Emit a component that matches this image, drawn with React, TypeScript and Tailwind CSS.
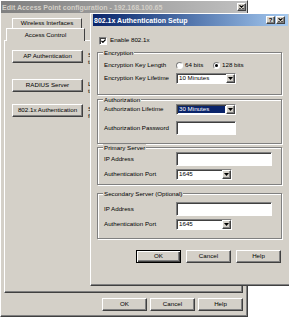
import React from "react";

const RAISED =
  "border border-t-white border-l-white border-r-[#404040] border-b-[#404040] shadow-[inset_-1px_-1px_0_#808080]";
const SUNKEN =
  "border border-t-[#808080] border-l-[#808080] border-r-white border-b-white shadow-[inset_1px_1px_0_#404040]";

const CloseGlyph = () => (
  <svg width="5" height="4" viewBox="0 0 5 4">
    <path d="M0.5 0.3L4.5 3.7M4.5 0.3L0.5 3.7" stroke="#000" strokeWidth="1.1" />
  </svg>
);

const Arrow = () => (
  <svg width="5" height="3" viewBox="0 0 5 3">
    <path d="M0 0H5L2.5 3Z" fill="#000" />
  </svg>
);

function CapButton({ children }: { children: React.ReactNode }) {
  return (
    <div className={`w-[9px] h-[8px] bg-[#d4d0c8] flex items-center justify-center ${RAISED}`}>
      {children}
    </div>
  );
}

function Button({ label, def, className = "" }: { label: string; def?: boolean; className?: string }) {
  const edge = def
    ? "border border-black shadow-[inset_1px_1px_0_#fff,inset_-1px_-1px_0_#404040,inset_-2px_-2px_0_#808080]"
    : RAISED;
  return (
    <div className={`h-[13px] bg-[#d4d0c8] flex items-center justify-center whitespace-nowrap ${edge} ${className}`}>
      {label}
    </div>
  );
}

function Combo({ value, className, active }: { value: string; className: string; active?: boolean }) {
  return (
    <div className={`h-full bg-white flex items-stretch ${SUNKEN} ${className}`}>
      <div className="flex-1 flex items-stretch p-[1px]">
        <span
          className={`flex-1 flex items-center pl-[1px] ${
            active ? "bg-[#0a246a] text-white" : ""
          }`}
        >
          {value}
        </span>
      </div>
      <div className={`w-[9px] bg-[#d4d0c8] flex items-center justify-center ${RAISED}`}>
        <Arrow />
      </div>
    </div>
  );
}

function Field({ className }: { className: string }) {
  return <div className={`h-full bg-white ${SUNKEN} ${className}`} />;
}

function Radio({ on }: { on?: boolean }) {
  return (
    <div className="w-[7px] h-[7px] rounded-full bg-white border border-t-[#808080] border-l-[#808080] border-r-white border-b-white flex items-center justify-center">
      {on && <div className="w-[3px] h-[3px] rounded-full bg-black" />}
    </div>
  );
}

function Group({ title, className, children }: { title: string; className: string; children: React.ReactNode }) {
  return (
    <div
      className={`ml-[4px] w-[185px] border border-[#808080] shadow-[inset_1px_1px_0_#fff,1px_1px_0_#fff] flex flex-col ${className}`}
    >
      <span className="-mt-[4px] ml-[5px] self-start px-[1px] h-[7px] leading-[7px] bg-[#d4d0c8] whitespace-nowrap">
        {title}
      </span>
      {children}
    </div>
  );
}

function Row({ label, className, children }: { label: string; className: string; children: React.ReactNode }) {
  return (
    <div className={`flex items-center pl-[6px] ${className}`}>
      <span className="w-[72px] whitespace-nowrap">{label}</span>
      {children}
    </div>
  );
}

// description beside each button; it sits under the dialog, only a sliver shows
function SideRow({ label, lines, className }: { label: string; lines: string[]; className: string }) {
  return (
    <div className={`flex items-start gap-[5px] ${className}`}>
      <Button label={label} className="w-[71px]" />
      <div className="flex flex-col pt-[1px] leading-[7px] whitespace-nowrap">
        {lines.map((l) => (
          <span key={l}>{l}</span>
        ))}
      </div>
    </div>
  );
}

export default function App() {
  return (
    <div className="relative w-[289px] h-[318px] overflow-hidden bg-white font-['Liberation_Sans',Arial,sans-serif] text-[6.2px] leading-none text-black">
      {/* Background window */}
      <div className={`w-[248px] h-[317px] bg-[#d4d0c8] flex flex-col ${RAISED}`}>
        <div className="h-[12px] flex items-center justify-between pl-[1px] pr-[1px] bg-gradient-to-r from-[#808080] to-[#c0c0c0]">
          <span className="text-[7px] font-bold text-[#d4d0c8] whitespace-nowrap">
            Edit Access Point configuration - 192.168.100.65
          </span>
          <CapButton>
            <CloseGlyph />
          </CapButton>
        </div>

        {/* Tabs */}
        <div className="flex flex-col">
          <div className="ml-[11px] mt-[5px] w-[70px] h-[10px] border border-b-0 border-t-white border-l-white border-r-[#404040] flex items-center justify-center whitespace-nowrap">
            Wireless Interfaces
          </div>
          <div className="relative z-10 ml-[5px] -mb-[1px] w-[79px] h-[13px] bg-[#d4d0c8] border border-b-0 border-t-white border-l-white border-r-[#404040] flex items-center justify-center whitespace-nowrap">
            Access Control
          </div>
        </div>

        {/* Tab panel */}
        <div className={`ml-[3px] w-[239px] h-[253px] flex flex-col pl-[7px] pt-[9px] ${RAISED}`}>
          <SideRow label="AP Authentication" lines={["Sets", "the"]} className="" />
          <SideRow label="RADIUS Server" lines={["Lists", "the"]} className="mt-[14px]" />
          <SideRow label="802.1x Authentication" lines={["Sets", "for"]} className="mt-[10px]" />
        </div>

        <div className="mt-[5px] mr-[4px] flex justify-end gap-[3px]">
          <Button label="OK" className="w-[45px]" />
          <Button label="Cancel" className="w-[45px]" />
          <Button label="Help" className="w-[45px]" />
        </div>
      </div>

      {/* 802.1x dialog, on top */}
      <div
        className={`absolute left-[90px] top-[13px] w-[201px] h-[273px] bg-[#d4d0c8] px-[2px] flex flex-col ${RAISED}`}
      >
        <div className="h-[12px] flex items-center justify-between pl-[1px] pr-[3px] bg-gradient-to-r from-[#0a246a] to-[#a6caf0]">
          <span className="text-[7px] font-bold text-white whitespace-nowrap">802.1x Authentication Setup</span>
          <div className="flex gap-[1px]">
            <CapButton>
              <span className="text-[6px] font-bold leading-none">?</span>
            </CapButton>
            <CapButton>
              <CloseGlyph />
            </CapButton>
          </div>
        </div>

        <div className="mt-[10px] ml-[6px] h-[9px] flex items-center gap-[3px]">
          <div className={`w-[8px] h-[8px] bg-white flex items-center justify-center ${SUNKEN}`}>
            <svg width="5" height="4" viewBox="0 0 5 4">
              <path d="M0.4 1.8L1.9 3.3L4.6 0.5" stroke="#000" strokeWidth="1.2" fill="none" />
            </svg>
          </div>
          <span>Enable 802.1x</span>
        </div>

        <Group title="Encryption" className="mt-[7px] h-[43px]">
          <Row label="Encryption Key Length" className="mt-[4px] h-[10px]">
            <div className="flex items-center">
              <div className="w-[37px] flex items-center gap-[2px]">
                <Radio />
                <span>64 bits</span>
              </div>
              <div className="flex items-center gap-[2px]">
                <Radio on />
                <span>128 bits</span>
              </div>
            </div>
          </Row>
          <Row label="Encryption Key Lifetime" className="mt-[3px] h-[11px]">
            <Combo value="10 Minutes" className="w-[60px]" />
          </Row>
        </Group>

        <Group title="Authorization" className="mt-[4px] h-[45px]">
          <Row label="Authorization Lifetime" className="mt-[1px] h-[11px]">
            <Combo value="30 Minutes" className="w-[60px]" active />
          </Row>
          <Row label="Authorization Password" className="mt-[6px] h-[14px]">
            <Field className="w-[60px]" />
          </Row>
        </Group>

        <Group title="Primary Server" className="mt-[3px] h-[38px]">
          <Row label="IP Address" className="mt-[1px] h-[14px]">
            <Field className="w-[96px]" />
          </Row>
          <Row label="Authentication Port" className="mt-[3px] h-[11px]">
            <Combo value="1645" className="w-[56px]" />
          </Row>
        </Group>

        <Group title="Secondary Server (Optional)" className="mt-[8px] h-[46px]">
          <Row label="IP Address" className="mt-[5px] h-[14px]">
            <Field className="w-[96px]" />
          </Row>
          <Row label="Authentication Port" className="mt-[3px] h-[11px]">
            <Combo value="1645" className="w-[56px]" />
          </Row>
        </Group>

        <div className="mt-[11px] pr-[7px] flex justify-end gap-[5px]">
          <Button label="OK" def className="w-[45px]" />
          <Button label="Cancel" className="w-[45px]" />
          <Button label="Help" className="w-[45px]" />
        </div>
      </div>
    </div>
  );
}
